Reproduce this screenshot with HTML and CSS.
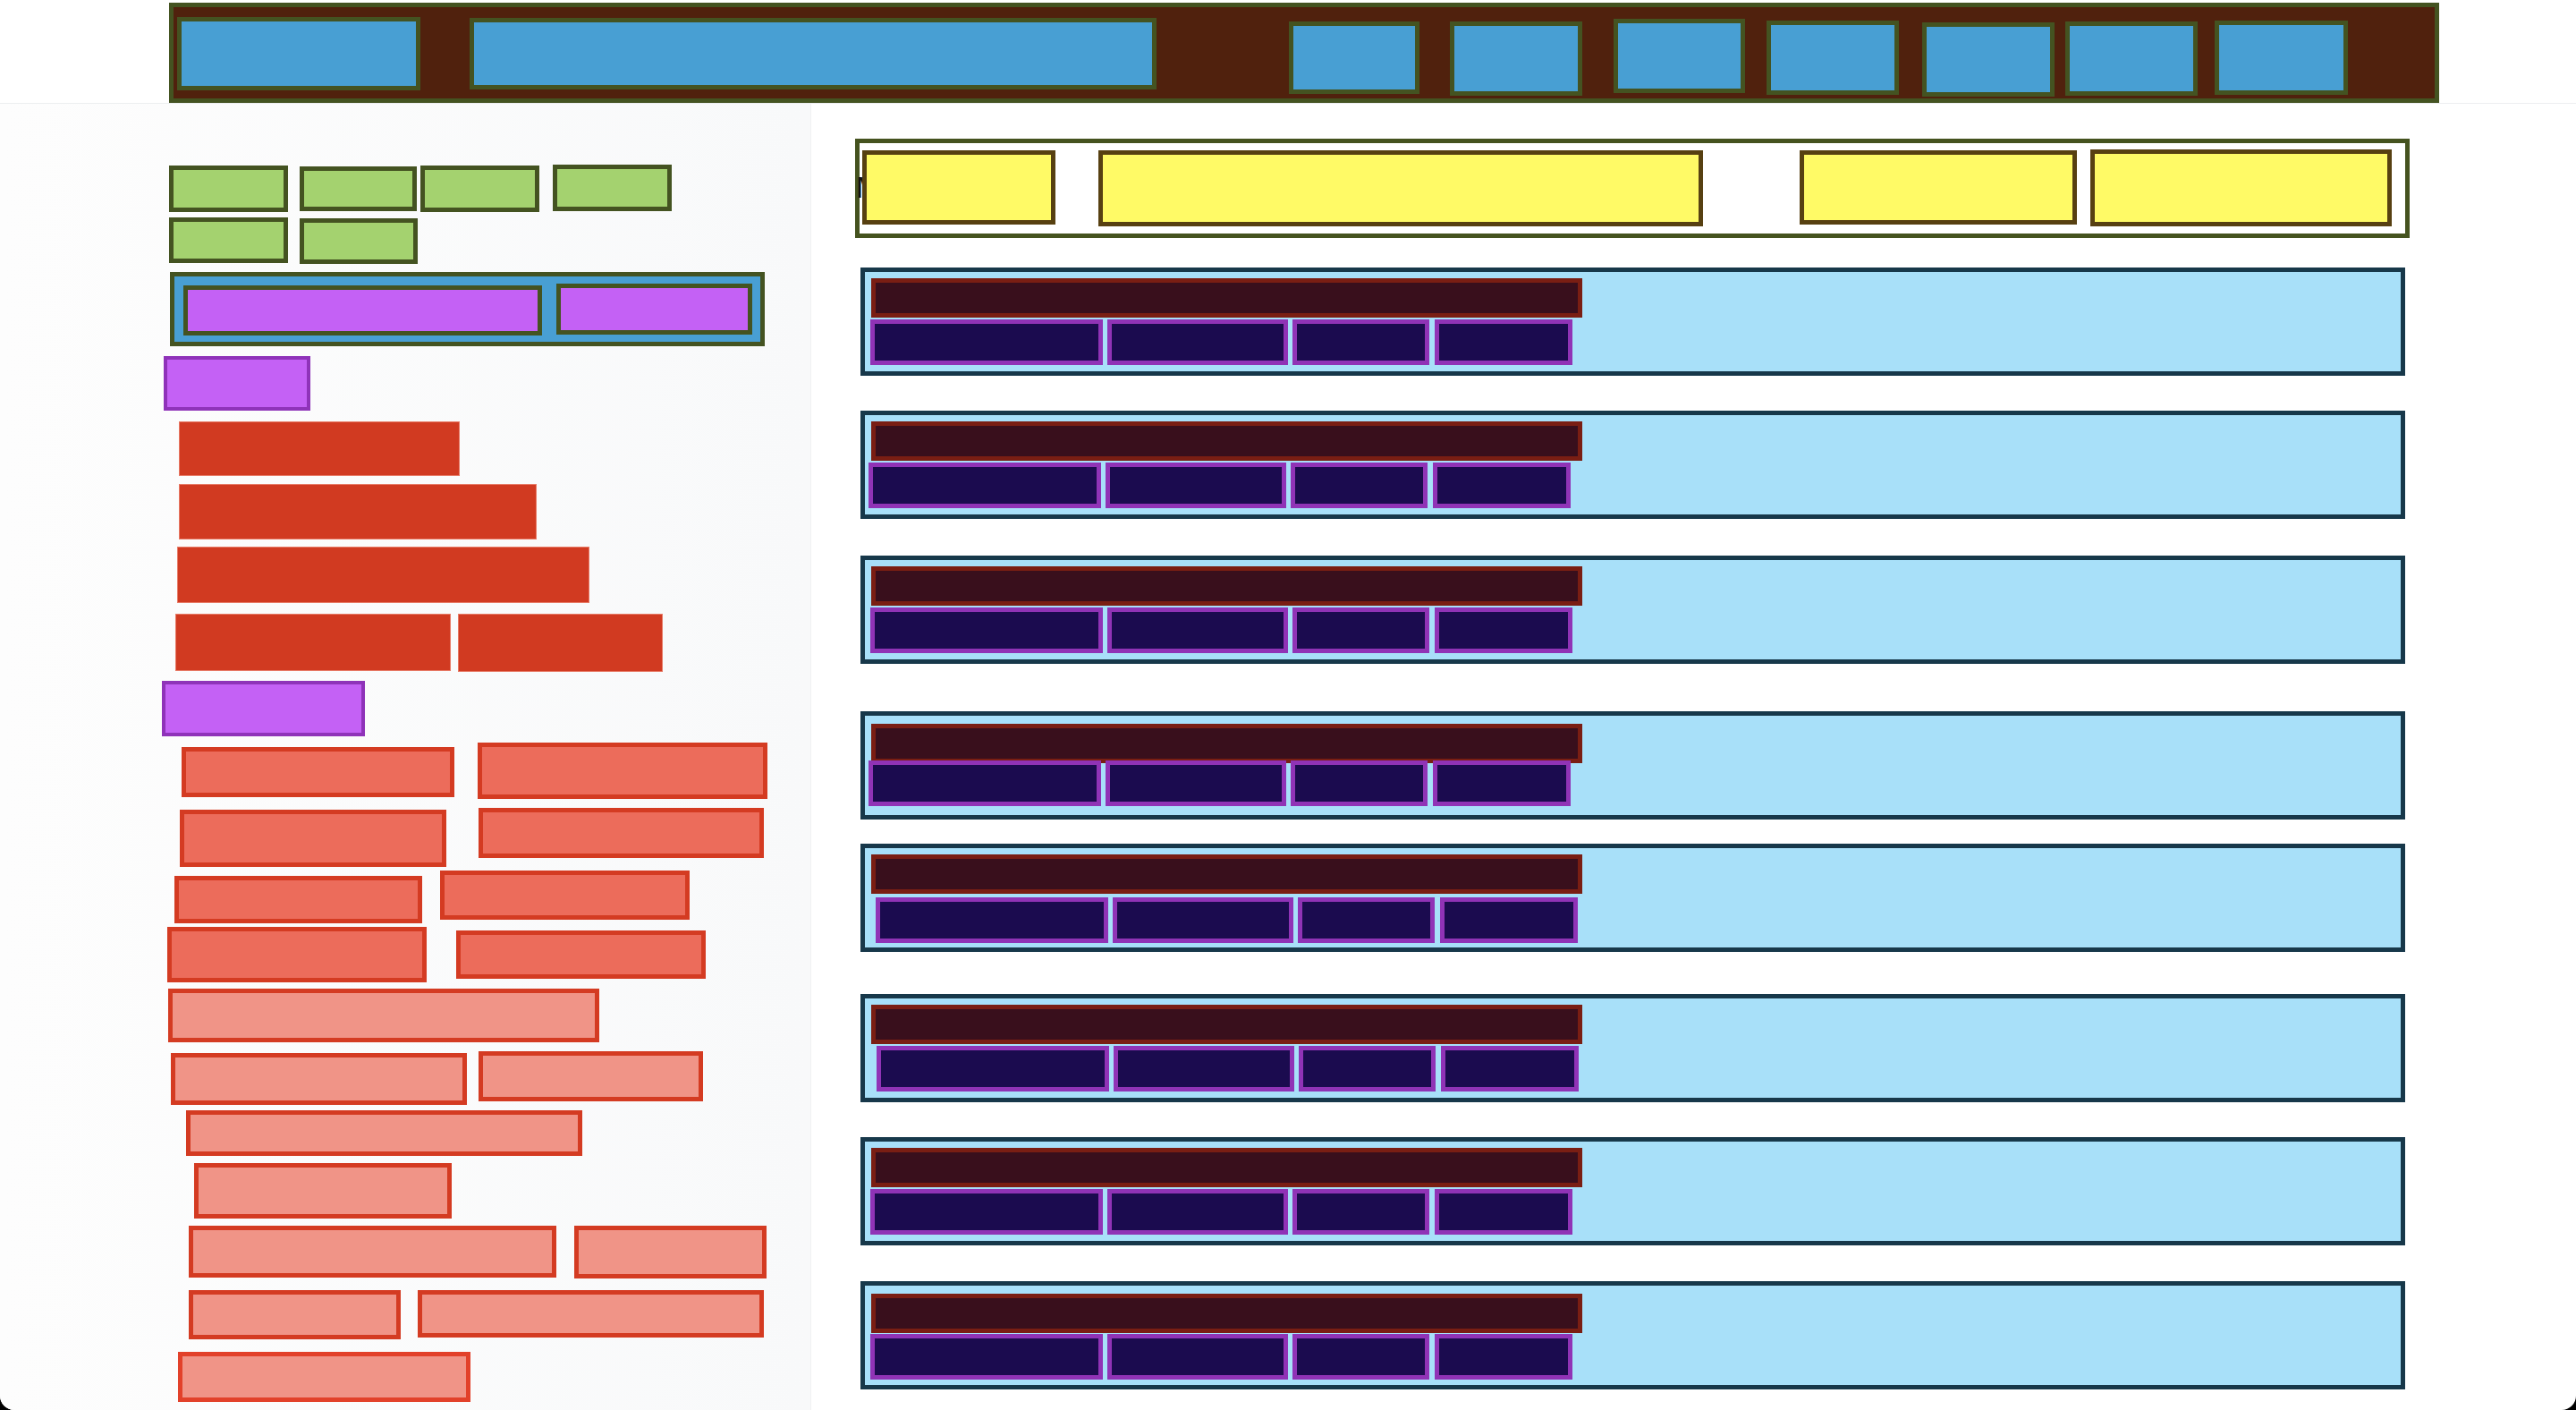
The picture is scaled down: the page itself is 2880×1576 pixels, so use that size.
FILE: index.html
```html
<!DOCTYPE html>
<html lang="en">
<head>
<meta charset="utf-8">
<title>Layout</title>
<link rel="stylesheet" href="styles.css">
</head>
<body>
<div class="page">
  <header class="topbar">
    <nav class="nav">
      <div class="nav-item n1"></div>
      <div class="nav-item n2"></div>
      <div class="nav-item n3"></div>
      <div class="nav-item n4"></div>
      <div class="nav-item n5"></div>
      <div class="nav-item n6"></div>
      <div class="nav-item n7"></div>
      <div class="nav-item n8"></div>
      <div class="nav-item n9"></div>
    </nav>
  </header>
  <div class="content">
    <aside class="sidebar">
      <div class="row g-row1">
        <div class="tag g1"></div>
        <div class="tag g2"></div>
        <div class="tag g3"></div>
        <div class="tag g4"></div>
      </div>
      <div class="row g-row2">
        <div class="tag g5"></div>
        <div class="tag g6"></div>
      </div>
      <div class="switch">
        <div class="switch-opt p1"></div>
        <div class="switch-opt p2"></div>
      </div>
      <div class="heading h1"></div>
      <div class="link r1"></div>
      <div class="link r2"></div>
      <div class="link r3"></div>
      <div class="row r4-row">
        <div class="link r4a"></div>
        <div class="link r4b"></div>
      </div>
      <div class="heading h2"></div>
      <div class="row s1">
        <div class="chipbtn s1a"></div>
        <div class="chipbtn s1b"></div>
      </div>
      <div class="row s2">
        <div class="chipbtn s2a"></div>
        <div class="chipbtn s2b"></div>
      </div>
      <div class="row s3">
        <div class="chipbtn s3a"></div>
        <div class="chipbtn s3b"></div>
      </div>
      <div class="row s4">
        <div class="chipbtn s4a"></div>
        <div class="chipbtn s4b"></div>
      </div>
      <div class="row s5">
        <div class="chipbtn light s5a"></div>
      </div>
      <div class="row s6">
        <div class="chipbtn light s6a"></div>
        <div class="chipbtn light s6b"></div>
      </div>
      <div class="row s7">
        <div class="chipbtn light s7a"></div>
      </div>
      <div class="row s8">
        <div class="chipbtn light s8a"></div>
      </div>
      <div class="row s9">
        <div class="chipbtn light s9a"></div>
        <div class="chipbtn light s9b"></div>
      </div>
      <div class="row s10">
        <div class="chipbtn light s10a"></div>
        <div class="chipbtn light s10b"></div>
      </div>
      <div class="row s11">
        <div class="chipbtn light s11a"></div>
      </div>
    </aside>
    <main class="main">
      <div class="filters">
        <span class="ftxt">M</span>
        <div class="fbox y1"></div>
        <div class="fbox y2"></div>
        <div class="fbox y3"></div>
        <div class="fbox y4"></div>
      </div>
      <div class="card c1"><div class="bar"></div><div class="chips"><div class="chip k1"></div><div class="chip k2"></div><div class="chip k3"></div><div class="chip k4"></div></div></div>
      <div class="card c2"><div class="bar"></div><div class="chips"><div class="chip k1"></div><div class="chip k2"></div><div class="chip k3"></div><div class="chip k4"></div></div></div>
      <div class="card c3"><div class="bar"></div><div class="chips"><div class="chip k1"></div><div class="chip k2"></div><div class="chip k3"></div><div class="chip k4"></div></div></div>
      <div class="card c4"><div class="bar"></div><div class="chips"><div class="chip k1"></div><div class="chip k2"></div><div class="chip k3"></div><div class="chip k4"></div></div></div>
      <div class="card c5"><div class="bar"></div><div class="chips"><div class="chip k1"></div><div class="chip k2"></div><div class="chip k3"></div><div class="chip k4"></div></div></div>
      <div class="card c6"><div class="bar"></div><div class="chips"><div class="chip k1"></div><div class="chip k2"></div><div class="chip k3"></div><div class="chip k4"></div></div></div>
      <div class="card c7"><div class="bar"></div><div class="chips"><div class="chip k1"></div><div class="chip k2"></div><div class="chip k3"></div><div class="chip k4"></div></div></div>
      <div class="card c8"><div class="bar"></div><div class="chips"><div class="chip k1"></div><div class="chip k2"></div><div class="chip k3"></div><div class="chip k4"></div></div></div>
    </main>
  </div>
</div>
</body>
</html>
```

FILE: styles.css
```css
* { box-sizing: border-box; margin: 0; padding: 0; }
html, body { background: #000; }
body {
  width: 2880px;
  height: 1576px;
  overflow: hidden;
  font-family: "Liberation Sans", Arial, sans-serif;
}
.page {
  width: 2880px;
  height: 1576px;
  background: #fff;
  border-radius: 0 0 16px 16px;
  overflow: hidden;
  display: flex;
  flex-direction: column;
}

/* ---------- top bar ---------- */
.topbar {
  height: 116px;
  flex: none;
  border-bottom: 1px solid #eceef0;
  padding: 3px 0 0 189px;
}
.nav {
  width: 2538px;
  height: 112px;
  background: #50210d;
  border: 5px solid #445321;
  display: flex;
  align-items: flex-start;
  padding-left: 4px;
}
.nav-item {
  flex: none;
  background: #489fd3;
  border: 5px solid #445321;
  height: 83px;
  width: 148px;
}
.n1 { width: 272px; height: 82px; margin-top: 11px; }
.n2 { width: 768px; height: 80px; margin-top: 12px; margin-left: 55px; }
.n3 { width: 146px; height: 81px; margin-top: 16px; margin-left: 148px; }
.n4 { margin-top: 16px; margin-left: 34px; }
.n5 { width: 147px; margin-top: 13px; margin-left: 35px; }
.n6 { margin-top: 15px; margin-left: 24px; }
.n7 { margin-top: 17px; margin-left: 26px; }
.n8 { margin-top: 16px; margin-left: 12px; }
.n9 { width: 149px; margin-top: 15px; margin-left: 19px; }

/* ---------- layout ---------- */
.content {
  flex: 1;
  min-height: 0;
  display: flex;
}
.sidebar {
  width: 907px;
  flex: none;
  background: linear-gradient(90deg, #fdfdfd 0%, #f8f9fa 100%);
  border-right: 1px solid #f0f1f3;
  display: flex;
  flex-direction: column;
  align-items: flex-start;
  overflow: hidden;
}
.row {
  display: flex;
  align-items: flex-start;
  flex: none;
}
.main {
  flex: 1;
  display: flex;
  flex-direction: column;
  align-items: flex-start;
  overflow: hidden;
}

/* ---------- sidebar: tags ---------- */
.tag {
  flex: none;
  background: #a4d26f;
  border: 5px solid #445321;
  width: 133px;
  height: 52px;
}
.g-row1 { margin-top: 68px; }
.g1 { margin-left: 189px; margin-top: 1px; }
.g2 { margin-left: 13px; margin-top: 2px; width: 131px; height: 50px; }
.g3 { margin-left: 4px; margin-top: 1px; }
.g4 { margin-left: 15px; }
.g-row2 { margin-top: 6px; }
.g5 { margin-left: 189px; height: 51px; }
.g6 { margin-left: 13px; margin-top: 1px; width: 132px; height: 51px; }

/* ---------- sidebar: switch ---------- */
.switch {
  flex: none;
  margin: 9px 0 0 190px;
  width: 665px;
  height: 83px;
  background: #489fd3;
  border: 5px solid #445321;
  display: flex;
  align-items: flex-start;
}
.switch-opt {
  flex: none;
  background: #c461f5;
  border: 5px solid #445321;
}
.p1 { width: 401px; height: 56px; margin: 10px 0 0 10px; }
.p2 { width: 219px; height: 57px; margin: 8px 0 0 16px; }

/* ---------- sidebar: headings & links ---------- */
.heading {
  flex: none;
  background: #c461f5;
  border: 4px solid #8f33b9;
}
.h1 { width: 164px; height: 61px; margin: 11px 0 0 183px; }
.h2 { width: 227px; height: 62px; margin: 10px 0 0 181px; }

.link {
  flex: none;
  background: #d13a21;
  border: 1px solid #e77a66;
}
.r1 { width: 314px; height: 61px; margin: 12px 0 0 200px; }
.r2 { width: 400px; height: 62px; margin: 9px 0 0 200px; }
.r3 { width: 461px; height: 63px; margin: 8px 0 0 198px; }
.r4-row { margin-top: 12px; }
.r4a { width: 308px; height: 64px; margin-left: 196px; }
.r4b { width: 229px; height: 65px; margin-left: 8px; }

/* ---------- sidebar: chip buttons ---------- */
.chipbtn {
  flex: none;
  background: #ec6c5b;
  border: 5px solid #d43b22;
}
.chipbtn.light { background: #f09487; }

.s1 { margin-top: 7px; }
.s1a { width: 305px; height: 56px; margin: 5px 0 0 203px; }
.s1b { width: 324px; height: 63px; margin-left: 26px; }
.s2 { margin-top: 10px; }
.s2a { width: 298px; height: 64px; margin: 2px 0 0 201px; }
.s2b { width: 319px; height: 56px; margin-left: 36px; }
.s3 { margin-top: 4px; }
.s3a { width: 277px; height: 53px; margin: 6px 0 0 195px; }
.s3b { width: 279px; height: 55px; margin-left: 20px; }
.s4 { margin-top: 4px; }
.s4a { width: 290px; height: 62px; margin-left: 187px; }
.s4b { width: 279px; height: 54px; margin: 4px 0 0 33px; }
.s5 { margin-top: 7px; }
.s5a { width: 482px; height: 60px; margin-left: 188px; }
.s6 { margin-top: 10px; }
.s6a { width: 331px; height: 58px; margin: 2px 0 0 191px; }
.s6b { width: 251px; height: 56px; margin-left: 13px; }
.s7 { margin-top: 6px; }
.s7a { width: 443px; height: 51px; margin-left: 208px; }
.s8 { margin-top: 8px; }
.s8a { width: 288px; height: 62px; margin-left: 217px; }
.s9 { margin-top: 8px; }
.s9a { width: 411px; height: 58px; margin-left: 211px; }
.s9b { width: 215px; height: 59px; margin-left: 20px; }
.s10 { margin-top: 13px; }
.s10a { width: 237px; height: 55px; margin-left: 211px; }
.s10b { width: 387px; height: 53px; margin-left: 19px; }
.s11 { margin-top: 14px; }
.s11a { width: 327px; height: 56px; margin-left: 199px; border-color: #e2412a; }

/* ---------- main: filters ---------- */
.filters {
  flex: none;
  margin: 39px 0 0 49px;
  width: 1738px;
  height: 111px;
  background: #fff;
  border: 5px solid #45531f;
  display: flex;
  align-items: flex-start;
}
.ftxt {
  flex: none;
  width: 28px;
  margin: 33px -21px 0 -4px;
  font-size: 33px;
  line-height: 33px;
  color: #111;
}
.fbox {
  flex: none;
  background: #fffa66;
  border: 5px solid #574011;
}
.y1 { width: 216px; height: 83px; margin-top: 8px; }
.y2 { width: 676px; height: 85px; margin: 8px 0 0 48px; }
.y3 { width: 310px; height: 83px; margin: 8px 0 0 108px; }
.y4 { width: 337px; height: 86px; margin: 7px 0 0 15px; }

/* ---------- main: cards ---------- */
.card {
  flex: none;
  margin-left: 55px;
  width: 1727px;
  height: 121px;
  background: #a8e0f9;
  border: 5px solid #17384a;
  padding: 7px 0 0 7px;
}
.c1 { margin-top: 33px; }
.c2 { margin-top: 39px; }
.c3 { margin-top: 41px; }
.c4 { margin-top: 53px; }
.c5 { margin-top: 27px; }
.c6 { margin-top: 47px; }
.c7 { margin-top: 39px; }
.c8 { margin-top: 40px; }

.bar {
  width: 795px;
  height: 44px;
  background: #390f1c;
  border: 5px solid #7a1e13;
}
.chips {
  display: flex;
  align-items: flex-start;
  margin: 2px 0 0 -1px;
}
.chip {
  flex: none;
  height: 51px;
  background: #1b0b4f;
  border: 5px solid #9033b6;
}
.k1 { width: 260px; }
.k2 { width: 202px; margin-left: 5px; }
.k3 { width: 153px; margin-left: 5px; }
.k4 { width: 154px; margin-left: 6px; }

/* small per-card variations seen in the reference */
.c2 .chips { margin-left: -3px; }
.c4 .bar { margin-top: 2px; }
.c4 .chips { margin-top: -3px; margin-left: -3px; }
.c5 .chips { margin-top: 4px; margin-left: 5px; }
.c6 .chips { margin-left: 6px; }
.c8 .bar { margin-top: 2px; }
.c8 .chips { margin-top: 1px; }
```
